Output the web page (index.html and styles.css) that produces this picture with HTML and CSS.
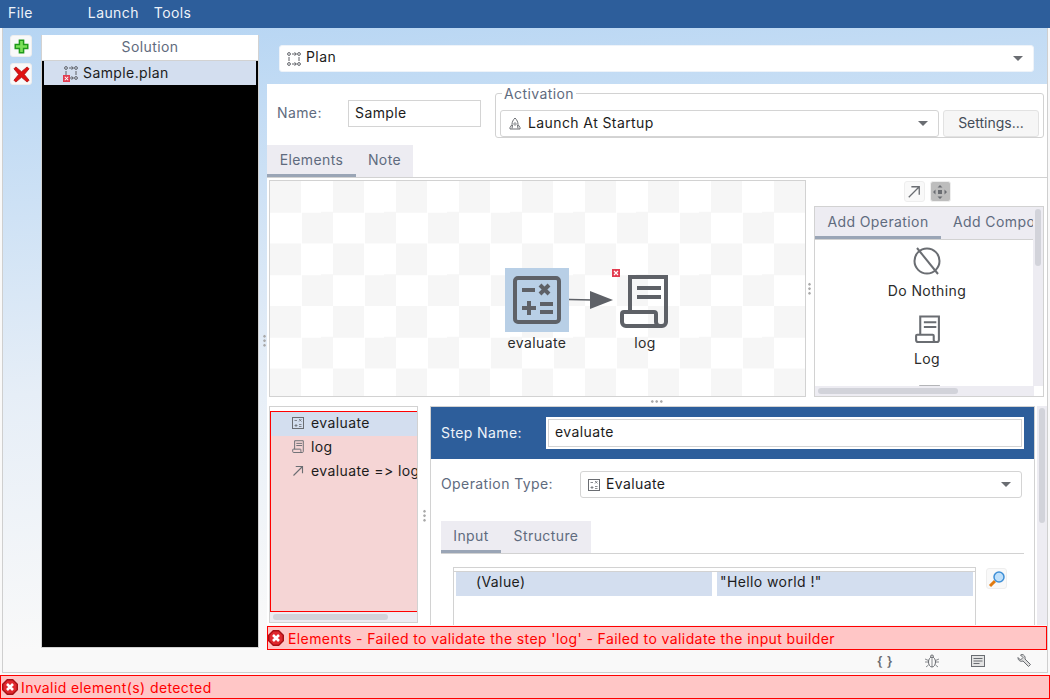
FILE: index.html
```html
<!DOCTYPE html>
<html lang="en">
<head>
    <meta charset="UTF-8">
    <meta name="viewport" content="width=device-width, initial-scale=1.0">
    <title>Plan</title>
    <link rel="stylesheet" href="styles.css">
</head>
<body>
    <svg class="defs" width="0" height="0">
        <symbol id="i-calc" viewBox="0 0 48 48">
            <rect x="2" y="2" width="44" height="44" rx="3" fill="none" stroke="currentColor" stroke-width="4"/>
            <path d="M9 14h13M27 9l9 9M36 9l-9 9M9 32h14M16 25v14M27 28h13M27 36h13" fill="none" stroke="currentColor" stroke-width="4"/>
        </symbol>
        <symbol id="i-log" viewBox="0 0 48 54">
            <path d="M10 38V3h36v45a4 4 0 0 1-4 4H6a4 4 0 0 1-4-4v-8a2 2 0 0 1 2-2h30a2 2 0 0 1 2 2v8a4 4 0 0 0 4 4" fill="none" stroke="currentColor" stroke-width="4"/>
            <path d="M17 14h24M17 23h24" fill="none" stroke="currentColor" stroke-width="4"/>
        </symbol>
        <symbol id="i-plan" viewBox="0 0 14 14">
            <g fill="none" stroke="currentColor" stroke-width="1">
                <circle cx="2" cy="2" r="1.400"/><circle cx="12" cy="2" r="1.400"/><circle cx="2" cy="12" r="1.400"/><circle cx="12" cy="12" r="1.400"/>
                <path d="M2 5v4M12 5v4M5 2h4M5 12h4M7.500 .5 9.500 2l-2 1.500M7.500 10.500l2 1.500-2 1.500"/>
            </g>
        </symbol>
        <symbol id="i-arrow" viewBox="0 0 16 16">
            <path d="M2 14 14 2M5 2h9v9" fill="none" stroke="currentColor" stroke-width="1.500"/>
        </symbol>
        <symbol id="i-error" viewBox="0 0 16 16">
            <path d="M5 0h6l5 5v6l-5 5H5l-5-5V5z" fill="#a80f14"/>
            <path d="M5.500 1.500h5l4 4v5l-4 4h-5l-4-4v-5z" fill="#e0272d"/>
            <path d="m5 5 6 6M11 5l-6 6" stroke="#fff" stroke-width="2.600"/>
        </symbol>
        <symbol id="i-badge" viewBox="0 0 8 8">
            <rect width="8" height="8" fill="#e23c50"/>
            <path d="m2 2 4 4M6 2 2 6" stroke="#fff" stroke-width="1.200"/>
        </symbol>
        <symbol id="i-combo-calc" viewBox="0 0 12 12">
            <rect x=".5" y=".5" width="11" height="11" fill="none" stroke="currentColor"/>
            <path d="M2.500 3.500h2.500M7 2l2.500 2.500M9.500 2 7 4.500M2.500 8.500h3M4 7v3M7 7.500h2.500M7 9.500h2.500" fill="none" stroke="currentColor" stroke-width=".8"/>
        </symbol>
    </svg>

    <div class="menubar">
        <span class="menu-item menu-file">File</span>
        <span class="menu-item menu-launch">Launch</span>
        <span class="menu-item">Tools</span>
    </div>

    <div class="workspace">
        <div class="side-tools">
            <button class="tool-btn">
                <svg width="15" height="15" viewBox="0 0 18 18"><path d="M6.500 1.500h5v5h5v5h-5v5h-5v-5h-5v-5h5z" fill="#7be05a" stroke="#1f9a1a" stroke-width="1.800"/></svg>
            </button>
            <button class="tool-btn">
                <svg width="17" height="17" viewBox="0 0 18 18"><path d="M3 1l6 5 6-5 2 2-5 6 5 6-2 2-6-5-6 5-2-2 5-6-5-6z" fill="#e01010" stroke="#a80c0c" stroke-width=".8"/></svg>
            </button>
        </div>

        <div class="solution">
            <div class="solution-head">Solution</div>
            <div class="solution-list">
                <div class="solution-row">
                    <span class="plan-mark">
                        <svg class="ico-plan" width="14" height="14"><use href="#i-plan"/></svg>
                        <svg class="row-badge" width="7" height="7"><use href="#i-badge"/></svg>
                    </span>
                    <span class="row-text">Sample.plan</span>
                </div>
            </div>
        </div>

        <div class="v-split side-split"><span class="grip"></span></div>

        <div class="editor">
            <div class="plan-bar">
                <div class="combo plan-combo">
                    <svg class="ico-plan" width="14" height="14"><use href="#i-plan"/></svg>
                    <span class="combo-text">Plan</span>
                    <span class="caret"></span>
                </div>
            </div>

            <div class="editor-body">
                <div class="name-row">
                    <span class="field-label">Name:</span>
                    <div class="text-input name-input">Sample</div>
                    <fieldset class="activation">
                        <legend>Activation</legend>
                        <div class="combo activation-combo">
                            <svg width="14" height="14" viewBox="0 0 14 14" class="ico-rocket"><path d="M7 1c2 2 3 4 3 6.500l2 3v1.500H2v-1.500l2-3C4 5 5 3 7 1zM4 11.500 4.500 8M10 11.500 9.500 8" fill="none" stroke="currentColor"/><circle cx="7" cy="7" r="1.200" fill="none" stroke="currentColor" stroke-width=".8"/></svg>
                            <span class="combo-text">Launch At Startup</span>
                            <span class="caret"></span>
                        </div>
                        <button class="settings-btn">Settings...</button>
                    </fieldset>
                </div>

                <div class="tabs main-tabs">
                    <span class="tab active tab-elements">Elements</span>
                    <span class="tab tab-note">Note</span>
                </div>

                <div class="designer">
                    <div class="canvas">
                        <div class="node node-evaluate">
                            <div class="node-icon selected"><svg width="48" height="48"><use href="#i-calc"/></svg></div>
                            <div class="node-label">evaluate</div>
                        </div>
                        <svg class="edge" width="46" height="20" viewBox="0 0 46 20"><path d="M0 9.500 24 10" stroke="#5e6167" stroke-width="1.500"/><path d="M21 1 44 10 21 19z" fill="#5e6167"/></svg>
                        <svg class="node-badge" width="8" height="8"><use href="#i-badge"/></svg>
                        <div class="node node-log">
                            <div class="node-icon"><svg width="48" height="54"><use href="#i-log"/></svg></div>
                            <div class="node-label">log</div>
                        </div>
                    </div>
                    <div class="v-split wide"><span class="grip"></span></div>
                    <div class="palette-col">
                        <div class="palette-tools">
                            <button class="small-btn"><svg class="ico-gray" width="14" height="14"><use href="#i-arrow"/></svg></button>
                            <button class="small-btn on">
                                <svg width="14" height="14" viewBox="0 0 14 14"><path d="M7 0l2.500 2.500h-5zM7 14l-2.500-2.500h5zM0 7l2.500-2.500v5zM14 7l-2.500 2.500v-5z" fill="#6a6d72"/><rect x="5" y="5" width="4" height="4" fill="#6a6d72"/></svg>
                            </button>
                        </div>
                        <div class="palette">
                            <div class="tabs palette-tabs">
                                <span class="tab active tab-addop">Add Operation</span>
                                <span class="tab tab-addcomp">Add Compo</span>
                            </div>
                            <div class="palette-list">
                                <div class="palette-item">
                                    <svg class="ico-gray" width="28" height="28" viewBox="0 0 28 28"><circle cx="14" cy="14" r="12.500" fill="none" stroke="currentColor" stroke-width="2"/><path d="M4 1 25 27" stroke="currentColor" stroke-width="2"/></svg>
                                    <span>Do Nothing</span>
                                </div>
                                <div class="palette-item">
                                    <svg class="ico-gray" width="25" height="28"><use href="#i-log"/></svg>
                                    <span>Log</span>
                                </div>
                                <div class="palette-item cut">
                                    <svg class="ico-gray" width="25" height="28"><use href="#i-log"/></svg>
                                </div>
                            </div>
                            <div class="scroll-v palette-sv"><span class="thumb-v"></span></div>
                            <div class="scroll-h palette-sh"><span class="thumb-h"></span></div>
                        </div>
                    </div>
                </div>

                <div class="h-split"><span class="grip-h"></span></div>

                <div class="lower">
                    <div class="steps">
                        <div class="steps-inner">
                            <div class="step-row sel"><svg class="ico-gray" width="12" height="12"><use href="#i-combo-calc"/></svg>evaluate</div>
                            <div class="step-row"><svg class="ico-gray" width="12" height="13"><use href="#i-log"/></svg>log</div>
                            <div class="step-row"><svg class="ico-gray" width="12" height="12"><use href="#i-arrow"/></svg>evaluate =&gt; log</div>
                        </div>
                        <div class="scroll-h steps-sh"><span class="thumb-h"></span></div>
                    </div>
                    <div class="v-split lower-split"><span class="grip"></span></div>
                    <div class="detail">
                        <div class="step-head">
                            <span class="step-label">Step Name:</span>
                            <div class="step-input"><span>evaluate</span></div>
                        </div>
                        <div class="op-row">
                            <span class="field-label">Operation Type:</span>
                            <div class="combo op-combo">
                                <svg class="ico-gray" width="12" height="12"><use href="#i-combo-calc"/></svg>
                                <span class="combo-text">Evaluate</span>
                                <span class="caret"></span>
                            </div>
                        </div>
                        <div class="tabs input-tabs">
                            <span class="tab active tab-input">Input</span>
                            <span class="tab tab-structure">Structure</span>
                        </div>
                        <div class="input-area">
                            <div class="input-table">
                                <div class="table-head"></div>
                                <div class="cell">(Value)</div>
                                <div class="cell value">"Hello world !"</div>
                            </div>
                            <button class="small-btn lens">
                                <svg width="18" height="18" viewBox="0 0 18 18"><path d="M7 11 2 16" stroke="#e07a10" stroke-width="3"/><circle cx="11" cy="7" r="5" fill="#bfe0fb" stroke="#3f8fd6" stroke-width="1.500"/></svg>
                            </button>
                        </div>
                    </div>
                    <div class="scroll-v detail-sv"><span class="thumb-v"></span></div>
                </div>

                <div class="error-bar inner-error">
                    <svg width="16" height="16"><use href="#i-error"/></svg>
                    Elements - Failed to validate the step 'log' - Failed to validate the input builder
                </div>

                <div class="bottom-icons">
                    <span class="curly">{ }</span>
                    <svg class="ico-gray" width="14" height="14" viewBox="0 0 14 14"><ellipse cx="7" cy="8" rx="3.500" ry="5" fill="none" stroke="currentColor"/><circle cx="7" cy="2.500" r="1.500" fill="none" stroke="currentColor"/><path d="M0 5l3.500 1.500M14 5l-3.500 1.500M0 8h3.500M14 8h-3.500M1 13l2.500-2M13 13l-2.500-2M7 5v8" stroke="currentColor" fill="none" stroke-width=".8"/></svg>
                    <svg class="ico-gray" width="14" height="12" viewBox="0 0 14 12"><rect x=".5" y=".5" width="13" height="11" fill="#e4e4e4" stroke="currentColor"/><path d="M2.500 3.500h9M2.500 6h9M2.500 8.500h6" stroke="currentColor"/></svg>
                    <svg class="ico-gray" width="14" height="14" viewBox="0 0 14 14"><path d="M1 3.500 3.500 6 6 3.500 3.500 1 5 .5a3.500 3.500 0 0 1 3 4.500l5.500 5.500-2 2L6 7A3.500 3.500 0 0 1 1 3.500z" fill="#ddd" stroke="currentColor"/></svg>
                </div>
            </div>
        </div>
    </div>

    <div class="error-bar status-error">
        <svg width="16" height="16"><use href="#i-error"/></svg>
        Invalid element(s) detected
    </div>
</body>
</html>
```
FILE: styles.css
```css
* {
    box-sizing: border-box;
}

html, body {
    height: 100%;
}

body {
    margin: 0;
    display: flex;
    flex-direction: column;
    font-family: Inter, 'Open Sans', sans-serif;
    font-size: 14px;
    letter-spacing: 0.4px;
    font-variant-ligatures: none;
    font-feature-settings: "calt" 0;
    color: #1c1c1c;
    background-color: #f9f9f9;
    overflow: hidden;
}

button {
    padding: 0;
    font: inherit;
    letter-spacing: inherit;
}

.defs {
    display: none;
}

.menubar {
    display: flex;
    flex: none;
    align-items: center;
    height: 28px;
    padding: 0 0 4px 8px;
    background-color: #2d5e9b;
    color: #eef3f9;
}

.menu-item {
    margin-right: 18px;
}

.menu-file {
    margin-right: 55px;
}

.menu-launch {
    margin-right: 15px;
}

.workspace {
    display: flex;
    flex: none;
    height: 645px;
    margin: 0 2px;
    border: 1px solid #cfcfcf;
    border-top: 0;
    background: linear-gradient(175deg, #b6d5f3 0%, #e6eef7 50%, #f9f9f9 85%);
}

.side-tools {
    display: flex;
    flex: none;
    flex-direction: column;
    gap: 6px;
    width: 38px;
    padding: 7px 0 0 7px;
}

.tool-btn {
    display: flex;
    align-items: center;
    justify-content: center;
    width: 22px;
    height: 22px;
    background-color: #f9f9f9;
    border: 1px solid #eeeeee;
    border-radius: 3px;
}

.solution {
    display: flex;
    flex: none;
    flex-direction: column;
    width: 218px;
    height: 613px;
    margin-top: 7px;
    border: 1px solid #d2d2d2;
    border-top: 0;
    background-color: #000;
}

.solution-head {
    height: 26px;
    background-color: #fff;
    border-bottom: 1px solid #d2d2d2;
    color: #5f6b7e;
    text-align: center;
    line-height: 23px;
}

.solution-list {
    padding: 0 2px;
}

.solution-row {
    display: flex;
    align-items: center;
    height: 24px;
    padding-left: 20px;
    gap: 5px;
    background-color: #d3deef;
}

.row-text {
    margin-bottom: 2px;
}

.plan-mark {
    position: relative;
    display: flex;
}

.ico-plan {
    color: #5e6167;
}

.row-badge {
    position: absolute;
    left: -1px;
    bottom: -2px;
}

.v-split {
    position: relative;
    flex: none;
    width: 8px;
}

.grip {
    display: block;
    position: absolute;
    left: 3px;
    top: calc(50% - 7px);
    width: 3px;
    height: 14px;
    background-image: radial-gradient(circle, #a9a9a9 1.200px, transparent 1.400px);
    background-size: 3px 4.500px;
}

.side-split .grip {
    left: 4px;
    top: 306px;
}

.v-split.wide .grip {
    left: 2px;
}

.editor {
    display: flex;
    flex: none;
    flex-direction: column;
    width: 780px;
}

.plan-bar {
    flex: none;
    height: 56px;
    padding: 17px 0 0 12px;
}

.combo {
    display: flex;
    align-items: center;
    gap: 6px;
    height: 27px;
    padding-left: 7px;
    background-color: #fff;
    border: 1px solid #d4d4d4;
    border-radius: 3px;
}

.combo-text {
    flex: 1;
}

.caret {
    width: 0;
    height: 0;
    margin-right: 10px;
    border-left: 5px solid transparent;
    border-right: 5px solid transparent;
    border-top: 5px solid #6a6d72;
}

.plan-combo {
    gap: 5px;
    width: 755px;
    border-color: #eef3f9;
}

.plan-combo .combo-text {
    margin-bottom: 5px;
}

.editor-body {
    display: flex;
    flex: 1;
    flex-direction: column;
    background-color: #f9f9f9;
}

.name-row {
    display: flex;
    flex: none;
    height: 61px;
    padding-left: 10px;
    background-color: #fff;
}

.field-label {
    color: #5f6b7e;
}

.name-row > .field-label {
    width: 71px;
    margin-top: 20px;
}

.text-input {
    height: 27px;
    padding: 3px 6px;
    background-color: #fff;
    border: 1px solid #d4d4d4;
}

.name-input {
    width: 133px;
    margin-top: 16px;
}

.activation {
    display: flex;
    gap: 4px;
    width: 549px;
    height: 53px;
    margin: 1px 0 0 14px;
    padding: 8px 4px 0 4px;
    border: 1px solid #d2d2d2;
    border-radius: 3px;
    min-width: 0;
}

.activation legend {
    padding: 0 2px;
    margin-left: 2px;
    color: #5f6b7e;
    line-height: 17px;
}

.activation-combo {
    width: 439px;
}

.activation-combo .combo-text {
    margin-bottom: 2px;
}

.ico-rocket {
    color: #6a6d72;
}

.settings-btn {
    width: 96px;
    height: 27px;
    padding-bottom: 2px;
    background-color: #f6f6f6;
    border: 1px solid #e2e2e2;
    border-radius: 3px;
    color: #444c58;
    letter-spacing: 0;
}

.tabs {
    display: flex;
    flex: none;
    height: 33px;
    border-bottom: 1px solid #d2d2d2;
    background-color: #fff;
}

.tab {
    display: block;
    height: 100%;
    line-height: 30px;
    text-align: center;
    background-color: #edecf2;
    color: #5f6b7e;
}

.tab.active {
    border-bottom: 3px solid #9aa5b6;
}

.tab-elements {
    width: 89px;
}

.tab-note {
    width: 57px;
}

.designer {
    display: flex;
    flex: none;
    height: 219px;
    padding: 2px 0 0 2px;
    background-color: #fff;
}

.canvas {
    position: relative;
    flex: none;
    width: 537px;
    height: 217px;
    border: 1px solid #d2d2d2;
    background-color: #fff;
    background-image: conic-gradient(#fff 25%, #f6f6f6 0 50%, #fff 0 75%, #f6f6f6 0);
    background-size: 63px 62.500px;
}

.node {
    position: absolute;
    display: flex;
    flex-direction: column;
    align-items: center;
    width: 64px;
    color: #5e6167;
}

.node-evaluate {
    left: 235px;
    top: 87px;
}

.node-log {
    left: 342px;
    top: 93px;
}

.node-icon {
    display: flex;
    align-items: center;
    justify-content: center;
    height: 64px;
}

.node-log .node-icon {
    height: 54px;
}

.node-icon.selected {
    width: 64px;
    background-color: #b8cfe6;
}

.node-label {
    margin-top: 2px;
    color: #2b2b2b;
    white-space: nowrap;
}

.node-log .node-label {
    margin-top: 6px;
    padding-left: 2px;
}

.edge {
    position: absolute;
    left: 299px;
    top: 109px;
}

.node-badge {
    position: absolute;
    left: 342px;
    top: 88px;
}

.palette-col {
    flex: none;
    width: 230px;
}

.palette-tools {
    display: flex;
    justify-content: center;
    gap: 5px;
    height: 26px;
    padding: 1px 4px 0 0;
}

.small-btn {
    display: flex;
    align-items: center;
    justify-content: center;
    width: 21px;
    height: 21px;
    background-color: #f9f9f9;
    border: 1px solid #eeeeee;
    border-radius: 3px;
}

.small-btn.on {
    background-color: #bdbdbd;
}

.ico-gray {
    flex: none;
    color: #6a6d72;
}

.palette {
    position: relative;
    height: 191px;
    border: 1px solid #d2d2d2;
    overflow: hidden;
}

.palette-tabs {
    width: 219px;
    height: 33px;
    overflow: hidden;
}

.tab-addop {
    flex: none;
    width: 126px;
}

.tab-addcomp {
    flex: none;
    width: 93px;
    padding-left: 12px;
    text-align: left;
    white-space: nowrap;
    overflow: hidden;
}

.palette-list {
    width: 224px;
    height: 146px;
    overflow: hidden;
}

.palette-item {
    display: flex;
    flex-direction: column;
    align-items: center;
    gap: 7px;
    height: 68px;
    padding-top: 7px;
    color: #2b2b2b;
}

.palette-item.cut {
    height: 20px;
    padding-top: 9px;
}

.scroll-v {
    position: absolute;
    background-color: #edecf2;
    padding: 2px;
}

.thumb-v {
    display: block;
    width: 6px;
    background-color: #d2d3da;
    border-radius: 3px;
}

.palette-sv {
    top: 0;
    right: 0;
    width: 10px;
    height: 179px;
}

.palette-sv .thumb-v {
    height: 57px;
}

.scroll-h {
    background-color: #edecf2;
    padding: 2px 3px;
}

.thumb-h {
    display: block;
    height: 6px;
    background-color: #d2d3da;
    border-radius: 3px;
}

.palette-sh {
    position: absolute;
    left: 0;
    bottom: 0;
    width: 219px;
    height: 10px;
}

.palette-sh .thumb-h {
    width: 140px;
}

.h-split {
    display: flex;
    flex: none;
    justify-content: center;
    align-items: center;
    height: 9px;
    background-color: #fff;
}

.grip-h {
    display: block;
    width: 14px;
    height: 3px;
    background-image: radial-gradient(circle, #a9a9a9 1.200px, transparent 1.400px);
    background-size: 4.500px 3px;
}

.lower {
    position: relative;
    display: flex;
    flex: none;
    height: 219px;
    padding-left: 2px;
    background-color: #fff;
    overflow: hidden;
}

.steps {
    display: flex;
    flex: none;
    flex-direction: column;
    width: 149px;
    height: 217px;
    border: 1px solid #d2d2d2;
}

.steps-inner {
    flex: 1;
    margin-top: 4px;
    border: 1px solid #f00;
    border-right: 0;
    background-color: #f5d5d5;
    overflow: hidden;
}

.step-row {
    display: flex;
    align-items: center;
    gap: 7px;
    height: 24px;
    padding: 0 0 3px 21px;
    white-space: nowrap;
}

.step-row.sel {
    background-color: #d3deef;
}

.steps-sh {
    flex: none;
    height: 10px;
}

.steps-sh .thumb-h {
    width: 115px;
}

.v-split.lower-split {
    width: 12px;
}

.v-split.lower-split .grip {
    left: 5px;
}

.detail {
    flex: none;
    width: 605px;
    height: 230px;
    border: 1px solid #d2d2d2;
    border-bottom: 0;
}

.step-head {
    display: flex;
    align-items: center;
    height: 52px;
    padding-left: 10px;
    background-color: #2d5e9b;
    color: #eef3f9;
}

.step-label {
    flex: none;
    width: 105px;
    margin-bottom: 2px;
}

.step-input {
    width: 478px;
    height: 32px;
    padding: 2px;
    background-color: #fff;
    color: #1c1c1c;
}

.step-input span {
    display: block;
    height: 28px;
    padding: 3px 6px;
    border: 1px solid #d4d4d4;
}

.op-row {
    display: flex;
    align-items: center;
    height: 27px;
    margin-top: 12px;
    padding-left: 10px;
}

.op-row .field-label {
    width: 139px;
    margin-bottom: 2px;
}

.op-combo {
    width: 442px;
}

.op-combo .combo-text {
    margin-bottom: 2px;
}

.input-tabs {
    width: 583px;
    margin: 23px 0 0 10px;
}

.tab-input {
    width: 60px;
}

.tab-structure {
    width: 90px;
}

.input-area {
    display: flex;
    padding: 13px 0 0 22px;
}

.input-table {
    display: grid;
    grid-template-columns: 256px 256px;
    column-gap: 5px;
    align-content: start;
    width: 523px;
    height: 70px;
    padding: 0 2px;
    border: 1px solid #d2d2d2;
}

.table-head {
    grid-column: 1 / 3;
    height: 4px;
    margin: 0 -2px;
    border-bottom: 1px solid #d2d2d2;
}

.cell {
    height: 24px;
    padding-left: 20px;
    line-height: 19px;
    background-color: #d3deef;
}

.cell.value {
    padding-left: 3px;
}

.lens {
    margin: 1px 0 0 10px;
}

.detail-sv {
    top: 0;
    right: 0;
    width: 10px;
    height: 219px;
}

.detail-sv .thumb-v {
    height: 115px;
}

.error-bar {
    display: flex;
    flex: none;
    align-items: center;
    height: 24px;
    background-color: #ffc6c6;
    border: 1px solid #f00;
    color: #f00;
}

.inner-error {
    gap: 4px;
    width: 780px;
    margin-top: 1px;
}

.status-error {
    gap: 3px;
    width: 100%;
    margin-top: 2px;
    padding-left: 1px;
}

.bottom-icons {
    display: flex;
    flex: none;
    align-items: center;
    justify-content: flex-end;
    gap: 32px;
    height: 22px;
    padding-right: 16px;
}

.curly {
    color: #6a6d72;
    font-size: 13px;
    font-weight: 600;
}
```
